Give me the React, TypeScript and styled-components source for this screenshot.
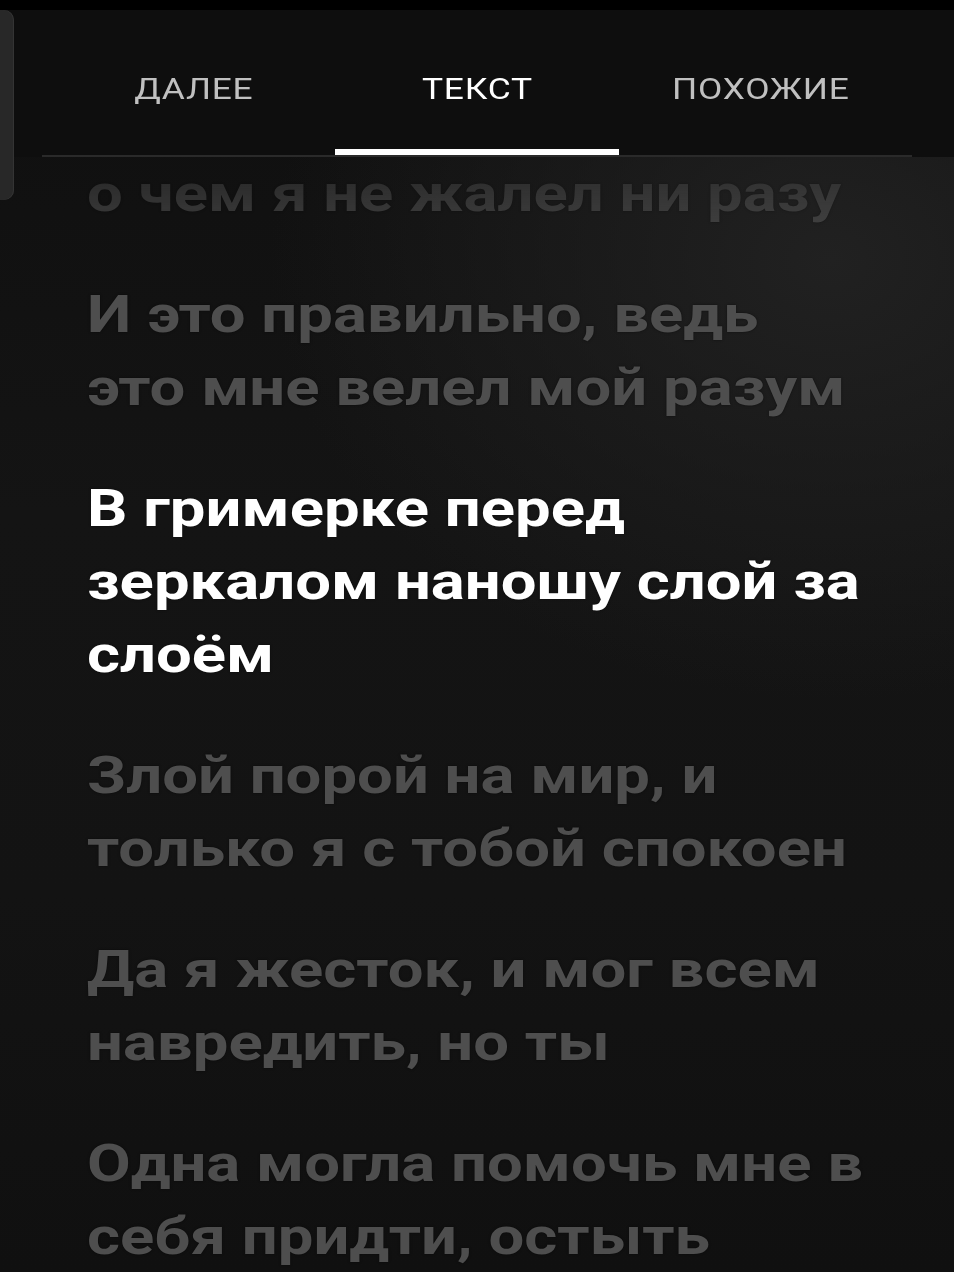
import React from "react";
import styled, { createGlobalStyle } from "styled-components";

const GlobalStyle = createGlobalStyle`
  html, body {
    margin: 0;
    padding: 0;
    background: #000;
  }
  * {
    box-sizing: border-box;
  }
`;

// the capture is stretched sideways, so text is widened to match
const STRETCH = 1.22;

const Screen = styled.div`
  position: relative;
  width: 954px;
  height: 1272px;
  padding-top: 10px;
  background: #000;
  display: flex;
  flex-direction: column;
  overflow: hidden;
  font-family: Roboto, "Noto Sans", "Liberation Sans", sans-serif;
`;

const Panel = styled.div`
  flex: 1;
  display: flex;
  flex-direction: column;
  min-height: 0;
  background:
    radial-gradient(ellipse 560px 440px at 830px 250px, #212121 0%, rgba(33, 33, 33, 0) 100%),
    linear-gradient(to bottom, #0f0f0f 0%, #141414 40%, #131313 70%, #101010 100%);
`;

const Handle = styled.div`
  position: absolute;
  left: 0;
  top: 10px;
  width: 14px;
  height: 190px;
  border-radius: 0 10px 10px 0;
  background: #282828;
  box-shadow: inset -1px 0 0 #343434;
`;

const Header = styled.div`
  background: #0e0e0e;
  padding: 0 42px;
`;

const TabBar = styled.div`
  display: grid;
  grid-template-columns: repeat(3, 1fr);
  padding: 0 10px;
  border-bottom: 2px solid #2a2a2a;
`;

const Tab = styled.div<{ $active?: boolean }>`
  height: 145px;
  display: flex;
  align-items: center;
  justify-content: center;
  padding-top: 19px;
  border-bottom: 6px solid ${(p) => (p.$active ? "#ffffff" : "transparent")};
`;

const TabLabel = styled.span<{ $active?: boolean }>`
  display: inline-block;
  font-size: 29px;
  font-weight: 400;
  letter-spacing: 0.6px;
  color: ${(p) => (p.$active ? "#ffffff" : "#c0c0c0")};
  transform: scaleX(${STRETCH});
`;

const Lyrics = styled.div`
  flex: 1;
  min-height: 0;
  overflow: hidden;
  padding: 0 40px 0 87px;
  display: flex;
  flex-direction: column;
  gap: 48px;
  -webkit-mask-image: linear-gradient(to bottom, rgba(0, 0, 0, 0.3) 0px, #000 125px);
  mask-image: linear-gradient(to bottom, rgba(0, 0, 0, 0.3) 0px, #000 125px);
`;

const Stanza = styled.div<{ $current?: boolean }>`
  display: flex;
  flex-direction: column;
  font-size: 52px;
  font-weight: 700;
  line-height: 73px;
  white-space: nowrap;
  color: ${(p) => (p.$current ? "#ffffff" : "#4e4e4e")};
  text-shadow: 0 0 2px rgba(0, 0, 0, 0.6);
`;

const Line = styled.span`
  display: block;
  transform: scaleX(${STRETCH});
  transform-origin: left center;
`;

const tabs = ["ДАЛЕЕ", "ТЕКСТ", "ПОХОЖИЕ"];

const stanzas: { lines: string[]; current?: boolean }[] = [
  { lines: ["о чем я не жалел ни разу"] },
  { lines: ["И это правильно, ведь", "это мне велел мой разум"] },
  { lines: ["В гримерке перед", "зеркалом наношу слой за", "слоём"], current: true },
  { lines: ["Злой порой на мир, и", "только я с тобой спокоен"] },
  { lines: ["Да я жесток, и мог всем", "навредить, но ты"] },
  { lines: ["Одна могла помочь мне в", "себя придти, остыть"] },
];

export default function App() {
  return (
    <>
      <GlobalStyle />
      <Screen>
        <Panel>
          <Header>
            <TabBar>
              {tabs.map((t) => (
                <Tab key={t} $active={t === "ТЕКСТ"}>
                  <TabLabel $active={t === "ТЕКСТ"}>{t}</TabLabel>
                </Tab>
              ))}
            </TabBar>
          </Header>
          <Lyrics>
            {stanzas.map((s, i) => (
              <Stanza key={i} $current={s.current}>
                {s.lines.map((l) => (
                  <Line key={l}>{l}</Line>
                ))}
              </Stanza>
            ))}
          </Lyrics>
        </Panel>
        <Handle />
      </Screen>
    </>
  );
}
